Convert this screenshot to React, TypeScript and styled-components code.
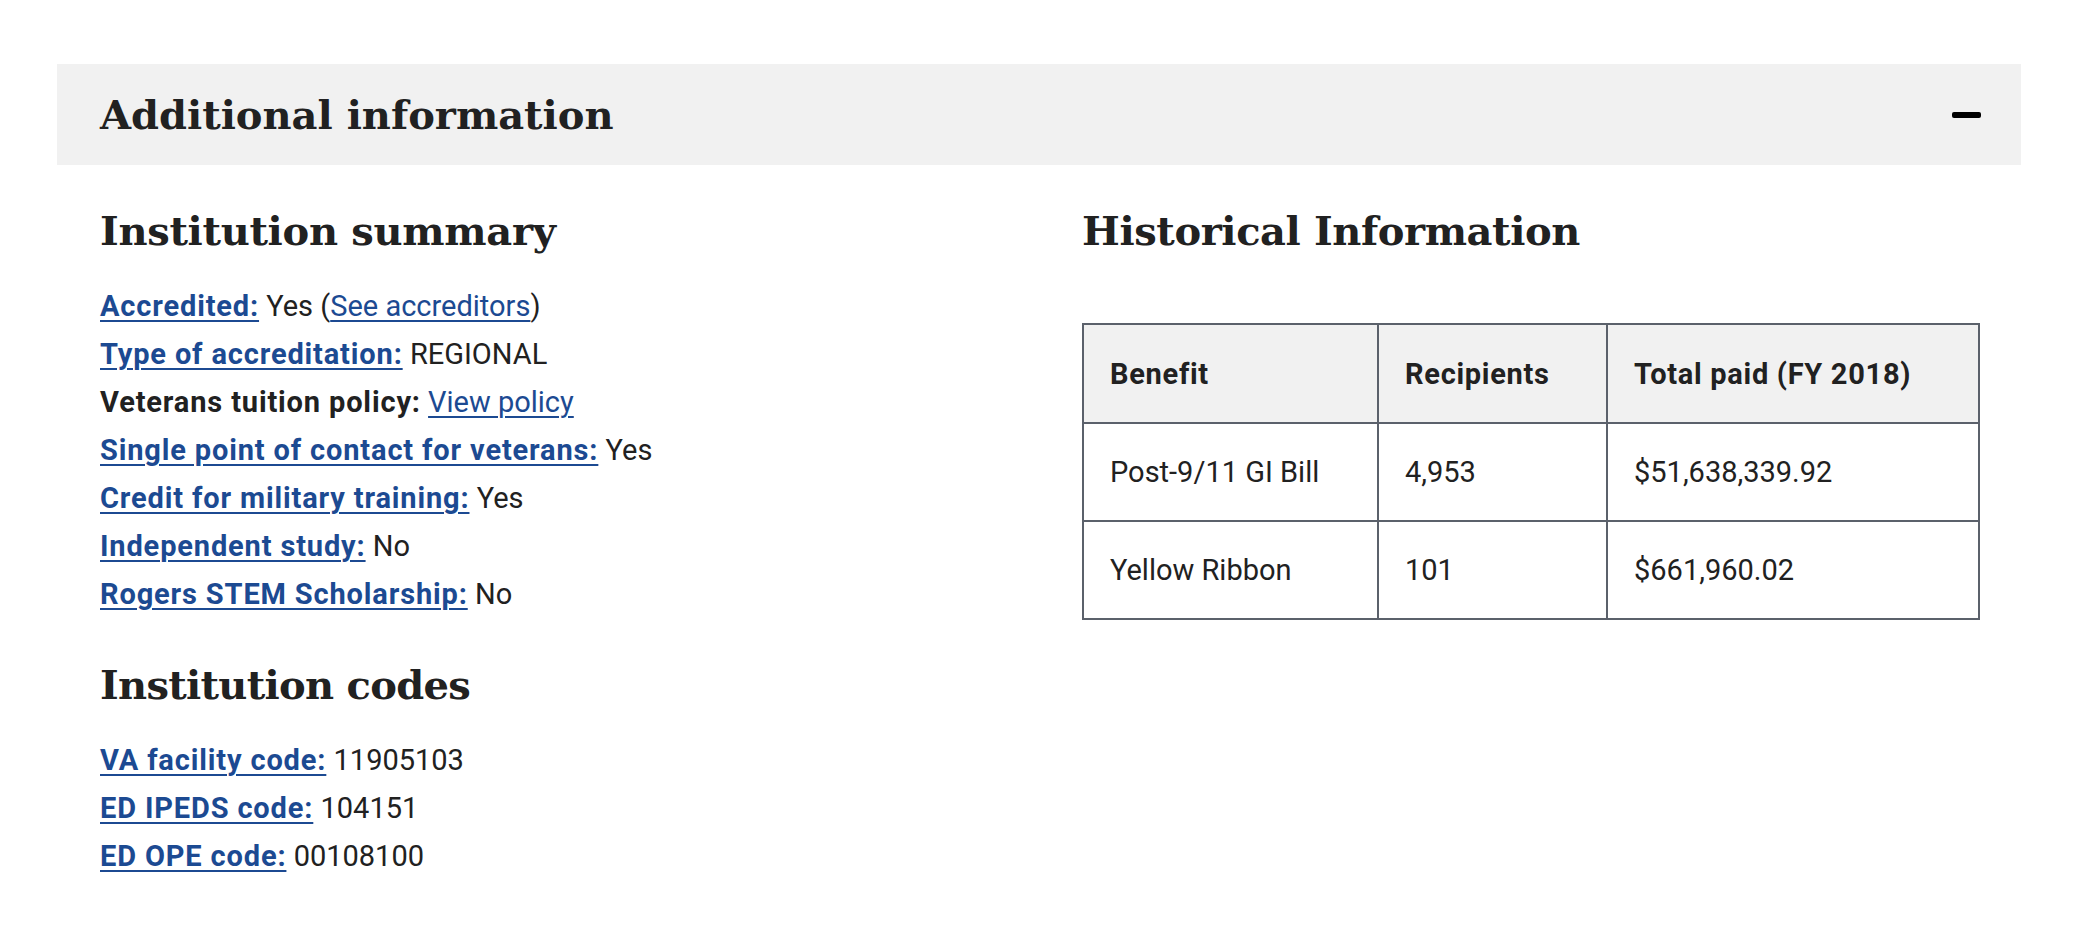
import React from "react";
import styled, { createGlobalStyle } from "styled-components";

const GlobalStyle = createGlobalStyle`
  html, body { margin: 0; padding: 0; background: #ffffff; }
  body {
    font-family: Roboto, "Liberation Sans", sans-serif;
    color: #212121;
  }
  * { box-sizing: border-box; }
`;

const Page = styled.div`
  padding: 64px 67px 40px 57px;
`;

const AccordionHeader = styled.button`
  display: flex;
  align-items: center;
  justify-content: space-between;
  width: 100%;
  height: 101px;
  padding: 0 40px 0 43px;
  border: none;
  background: #f1f1f1;
  cursor: pointer;
  text-align: left;
`;

const AccordionTitle = styled.span`
  font-family: "DejaVu Serif", serif;
  font-weight: 700;
  font-size: 40px;
  line-height: 52px;
  color: #212121;
  letter-spacing: 0px;
`;

const MinusIcon = styled.span`
  display: block;
  width: 29px;
  height: 6px;
  border-radius: 2px;
  background: #000000;
`;

const Content = styled.div`
  display: grid;
  grid-template-columns: 896px 896px;
  column-gap: 86px;
  padding: 40px 43px 0 43px;
`;

const Column = styled.section`
  display: flex;
  flex-direction: column;
`;

const SectionHeading = styled.h3<{ $top?: number; $bottom?: number; $spacing?: number }>`
  margin: ${(p) => p.$top ?? 0}px 0 ${(p) => p.$bottom ?? 25}px 0;
  font-family: "DejaVu Serif", serif;
  font-weight: 700;
  font-size: 40px;
  line-height: 52px;
  color: #212121;
  letter-spacing: ${(p) => p.$spacing ?? -0.5}px;
`;

const InfoList = styled.div`
  display: flex;
  flex-direction: column;
`;

const InfoRow = styled.div`
  font-size: 29px;
  line-height: 48px;
  color: #212121;
`;

const Label = styled.a`
  font-weight: 700;
  color: #1c4a92;
  letter-spacing: 0.85px;
  text-decoration: underline;
  text-decoration-thickness: 2px;
  text-underline-offset: 4px;
`;

const PlainLabel = styled.span`
  font-weight: 700;
  color: #212121;
  letter-spacing: 0.85px;
`;

const TextLink = styled.a`
  color: #1c4a92;
  text-decoration: underline;
  text-decoration-thickness: 2px;
  text-underline-offset: 4px;
`;

const Table = styled.table`
  margin-top: 66px;
  width: 896px;
  border-collapse: collapse;
  table-layout: fixed;
  font-size: 29px;
  line-height: 48px;
`;

const HeadCell = styled.th<{ $w: number }>`
  width: ${(p) => p.$w}px;
  height: 99px;
  padding: 0 26px;
  background: #f1f1f1;
  border: 2px solid #5b616b;
  text-align: left;
  font-weight: 700;
  letter-spacing: 0.7px;
  color: #212121;
`;

const Cell = styled.td`
  height: 98px;
  padding: 0 26px;
  border: 2px solid #5b616b;
  color: #212121;
`;

type Row = { label: string; link?: boolean; value: React.ReactNode };

const summaryRows: Row[] = [
  {
    label: "Accredited:",
    link: true,
    value: (
      <>
        Yes (<TextLink href="#">See accreditors</TextLink>)
      </>
    ),
  },
  { label: "Type of accreditation:", link: true, value: "REGIONAL" },
  {
    label: "Veterans tuition policy:",
    link: false,
    value: <TextLink href="#">View policy</TextLink>,
  },
  { label: "Single point of contact for veterans:", link: true, value: "Yes" },
  { label: "Credit for military training:", link: true, value: "Yes" },
  { label: "Independent study:", link: true, value: "No" },
  { label: "Rogers STEM Scholarship:", link: true, value: "No" },
];

const codeRows: Row[] = [
  { label: "VA facility code:", link: true, value: "11905103" },
  { label: "ED IPEDS code:", link: true, value: "104151" },
  { label: "ED OPE code:", link: true, value: "00108100" },
];

const history = [
  { benefit: "Post-9/11 GI Bill", recipients: "4,953", total: "$51,638,339.92" },
  { benefit: "Yellow Ribbon", recipients: "101", total: "$661,960.02" },
];

function Rows({ rows }: { rows: Row[] }) {
  return (
    <InfoList>
      {rows.map((r) => (
        <InfoRow key={r.label}>
          {r.link ? <Label href="#">{r.label}</Label> : <PlainLabel>{r.label}</PlainLabel>}{" "}
          {r.value}
        </InfoRow>
      ))}
    </InfoList>
  );
}

export default function App() {
  return (
    <>
      <GlobalStyle />
      <Page>
        <AccordionHeader type="button" aria-expanded="true">
          <AccordionTitle>Additional information</AccordionTitle>
          <MinusIcon />
        </AccordionHeader>
        <Content>
          <Column>
            <SectionHeading $spacing={-0.3}>Institution summary</SectionHeading>
            <Rows rows={summaryRows} />
            <SectionHeading $top={41} $spacing={-0.7}>Institution codes</SectionHeading>
            <Rows rows={codeRows} />
          </Column>
          <Column>
            <SectionHeading $bottom={0} $spacing={-0.4}>Historical Information</SectionHeading>
            <Table>
              <thead>
                <tr>
                  <HeadCell $w={295}>Benefit</HeadCell>
                  <HeadCell $w={229}>Recipients</HeadCell>
                  <HeadCell $w={372}>Total paid (FY 2018)</HeadCell>
                </tr>
              </thead>
              <tbody>
                {history.map((h) => (
                  <tr key={h.benefit}>
                    <Cell>{h.benefit}</Cell>
                    <Cell>{h.recipients}</Cell>
                    <Cell>{h.total}</Cell>
                  </tr>
                ))}
              </tbody>
            </Table>
          </Column>
        </Content>
      </Page>
    </>
  );
}
